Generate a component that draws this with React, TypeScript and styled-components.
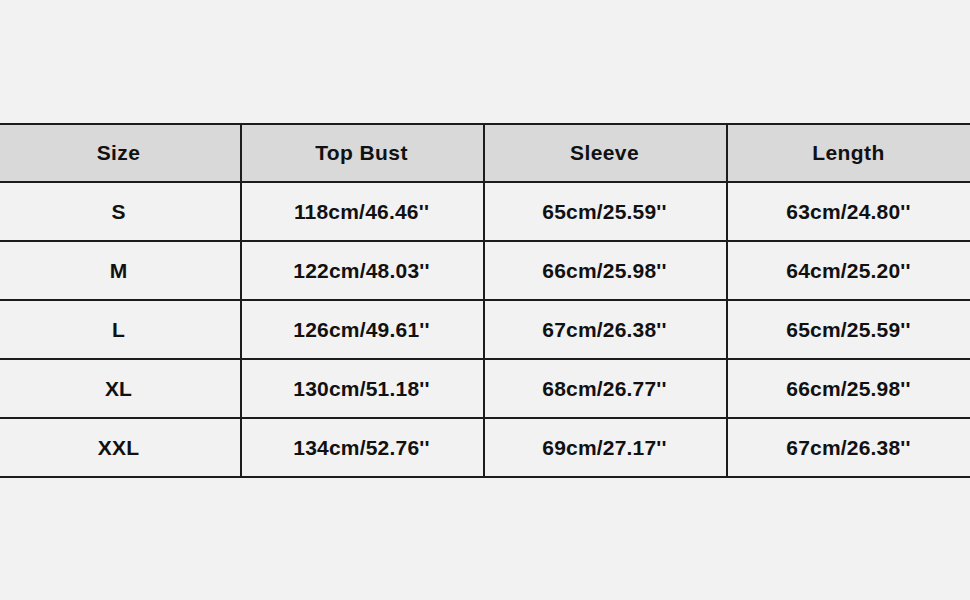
import * as React from 'react';
import styled, { createGlobalStyle } from 'styled-components';

const rows = [
  ['S', '118cm/46.46\'\'', '65cm/25.59\'\'', '63cm/24.80\'\''],
  ['M', '122cm/48.03\'\'', '66cm/25.98\'\'', '64cm/25.20\'\''],
  ['L', '126cm/49.61\'\'', '67cm/26.38\'\'', '65cm/25.59\'\''],
  ['XL', '130cm/51.18\'\'', '68cm/26.77\'\'', '66cm/25.98\'\''],
  ['XXL', '134cm/52.76\'\'', '69cm/27.17\'\'', '67cm/26.38\'\''],
];

const widths = [243, 243, 243, 245];

export default function App() {
  return (
    <>
      <Global />
      <Page>
        <Table>
          <colgroup>
            {widths.map((w, i) => (
              <Col key={i} $w={w} />
            ))}
          </colgroup>
          <thead>
            <tr>
              <Head>Size</Head>
              <Head>Top Bust</Head>
              <Head>Sleeve</Head>
              <Head>Length</Head>
            </tr>
          </thead>
          <tbody>
            {rows.map((r) => (
              <tr key={r[0]}>
                {r.map((c, i) => (
                  <Cell key={i}>{c}</Cell>
                ))}
              </tr>
            ))}
          </tbody>
        </Table>
      </Page>
    </>
  );
}

const Global = createGlobalStyle`
  html, body {
    margin: 0;
    padding: 0;
    background: #f2f2f2;
  }
`;
const Page = styled.div`
  width: 970px;
  height: 600px;
  overflow: hidden;
  background: #f2f2f2;
  padding-top: 123px;
  box-sizing: border-box;
`;
const Table = styled.table`
  width: 974px;
  margin-left: -3px;
  border-collapse: collapse;
  table-layout: fixed;
  font-family: 'Liberation Sans', Arial, sans-serif;
  font-weight: bold;
  color: #111;
  td, th {
    border: 2px solid #1c1c1c;
    text-align: center;
    padding: 0 2px 0 0;
  }
`;
const Col = styled.col<{ $w: number }>`
  width: ${(p) => p.$w}px;
`;
const Head = styled.th`
  height: 56px;
  background: #d9d9d9;
  font-size: 21px;
  letter-spacing: 0.4px;
  padding-top: 2px;
`;
const Cell = styled.td`
  height: 57px;
  background: #f2f2f2;
  font-size: 21px;
  letter-spacing: 0.2px;
`;
